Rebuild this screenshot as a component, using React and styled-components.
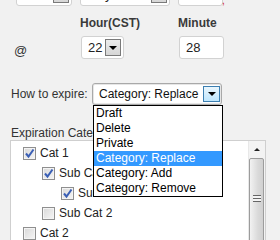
import React from 'react';
import styled, {createGlobalStyle} from 'styled-components';

const Global = createGlobalStyle`
  body {
    margin: 0;
    background: #f1f1f1;
    overflow: hidden;
  }
`;

const Page = styled.div`
  margin-top: -17px;
  padding-left: 10px;
  font-family: "Liberation Sans", Arial, sans-serif;
  font-size: 12px;
  color: #333;
`;

const DateRow = styled.div`
  display: flex;
  align-items: center;
  gap: 8px;
  padding-left: 6px;
`;

const Field = styled.div`
  box-sizing: border-box;
  width: ${p => p.w}px;
  height: 23px;
  display: flex;
  align-items: center;
  justify-content: space-between;
  padding: 0 2px 0 6px;
  background: #fff;
  border: 1px solid #d2d2d2;
  border-radius: 3px;
  color: #222;
  font-size: 13px;
`;

const DropButton = styled.span`
  box-sizing: border-box;
  width: 16px;
  height: 17px;
  display: flex;
  align-items: center;
  justify-content: center;
  border: 1px solid #7a7a7a;
  background: linear-gradient(#ececec, #d6d6d6);
`;

const Arrow = styled.span`
  width: 0;
  height: 0;
  border-left: 4px solid transparent;
  border-right: 4px solid transparent;
  border-top: 4px solid #000;
`;

const Mark = styled.span`
  color: #d02030;
  margin-left: -9px;
  align-self: flex-end;
  font-size: 10px;
  line-height: 10px;
`;

const TimeGrid = styled.div`
  display: grid;
  grid-template-columns: 70px 98px auto;
  grid-template-rows: 14px 23px;
  row-gap: 6px;
  margin-top: 10px;
`;

const ColLabel = styled.div`
  font-weight: bold;
  line-height: 14px;
  color: #3a3a3a;
  grid-column: ${p => p.col};
`;

const At = styled.div`
  grid-column: 1;
  grid-row: 2;
  align-self: end;
  padding-left: 4px;
  margin-bottom: 1px;
  line-height: 14px;
  font-size: 13px;
`;

const Cell = styled.div`
  grid-row: 2;
  grid-column: ${p => p.col};
  padding-left: ${p => p.pad || 0}px;
`;

const ExpireRow = styled.div`
  display: flex;
  align-items: center;
  margin-top: 24px;
`;

const RowLabel = styled.div`
  width: 82px;
  padding-left: 1px;
  box-sizing: border-box;
`;

const SelectWrap = styled.div`
  position: relative;
`;

const Select = styled.div`
  box-sizing: border-box;
  width: 130px;
  height: 22px;
  display: flex;
  align-items: center;
  justify-content: space-between;
  padding: 0 1px 0 6px;
  background: #fff;
  border: 1px solid #a9a9a9;
  border-radius: 3px;
  box-shadow: inset 0 0 0 1px #e6e6e6;
  color: #111;
`;

const BlueButton = styled(DropButton)`
  width: 17px;
  height: 16px;
  border-color: #3c7fb1;
  background: linear-gradient(#eaf6fd, #bee6fd);
`;

const Menu = styled.ul`
  position: absolute;
  top: 22px;
  left: 1px;
  width: 130px;
  box-sizing: border-box;
  margin: 0;
  padding: 0;
  list-style: none;
  background: #fff;
  border: 1px solid #000;
  z-index: 2;
`;

const Option = styled.li`
  height: 15px;
  line-height: 15px;
  padding-left: 2px;
  color: ${p => (p.active ? '#fff' : '#000')};
  background: ${p => (p.active ? '#3399ff' : 'transparent')};
`;

const SectionLabel = styled.div`
  margin-top: 21px;
  padding-left: 1px;
  line-height: 14px;
`;

const TreeBox = styled.div`
  width: 256px;
  height: 150px;
  box-sizing: border-box;
  display: flex;
  background: #fff;
  border: 1px solid #cfcfcf;
`;

const Tree = styled.div`
  flex: 1;
  padding-top: 2px;
`;

const Node = styled.div`
  height: 20px;
  display: flex;
  align-items: center;
  padding-left: ${p => 12 + p.level * 19}px;
  color: #222;
  white-space: nowrap;
`;

const Box = styled.span`
  box-sizing: border-box;
  width: 13px;
  height: 13px;
  margin-right: 4px;
  flex: none;
  display: flex;
  align-items: center;
  justify-content: center;
  border: 1px solid #8f8f8f;
  background: linear-gradient(135deg, #d8d8d8, #f6f6f6);
  box-shadow: inset 0 0 0 1px #f4f4f4;
`;

const Scroll = styled.div`
  width: 16px;
  display: flex;
  flex-direction: column;
  background: #f3f3f3;
  border-left: 1px solid #e8e8e8;
`;

const ScrollUp = styled.div`
  height: 17px;
  display: flex;
  align-items: center;
  justify-content: center;
`;

const UpArrow = styled.span`
  width: 0;
  height: 0;
  border-left: 3px solid transparent;
  border-right: 3px solid transparent;
  border-bottom: 3px solid #222;
`;

const Thumb = styled.div`
  height: 100px;
  margin: 0 1px 0 0;
  border: 1px solid #9c9c9c;
  border-radius: 2px;
  background: linear-gradient(to right, #f2f2f2, #dadada 60%, #d0d0d0);
  display: flex;
  align-items: center;
  justify-content: center;
  padding-bottom: 20px;
  box-sizing: border-box;
`;

const Grip = styled.span`
  width: 8px;
  height: 7px;
  background: repeating-linear-gradient(#666 0 1px, #f4f4f4 1px 3px);
`;

const Check = () => (
  <svg width="11" height="11" viewBox="0 0 11 11">
    <path d="M2 5.5 L4.5 8.5 L9.5 1.5" fill="none" stroke="#3a5fb5" strokeWidth="2" />
  </svg>
);

const options = ['Draft', 'Delete', 'Private', 'Category: Replace', 'Category: Add', 'Category: Remove'];

const nodes = [
  {label: 'Cat 1', level: 0, checked: true},
  {label: 'Sub Cat 1', level: 1, checked: true},
  {label: 'Sub Sub Cat 1', level: 2, checked: true},
  {label: 'Sub Cat 2', level: 1, checked: false},
  {label: 'Cat 2', level: 0, checked: false},
  {label: 'Cat 3', level: 0, checked: false},
];

export default function App() {
  return (
    <>
      <Global />
      <Page>
        <DateRow>
          <Field w={56}>2013<DropButton><Arrow /></DropButton></Field>
          <Field w={90}>May<DropButton><Arrow /></DropButton></Field>
          <Field w={45}>30</Field>
          <Mark>,</Mark>
        </DateRow>

        <TimeGrid>
          <ColLabel col={2}>Hour(CST)</ColLabel>
          <ColLabel col={3}>Minute</ColLabel>
          <At>@</At>
          <Cell col={2} pad={1}>
            <Field w={43}>22<DropButton><Arrow /></DropButton></Field>
          </Cell>
          <Cell col={3} pad={1}>
            <Field w={45}>28</Field>
          </Cell>
        </TimeGrid>

        <ExpireRow>
          <RowLabel>How to expire:</RowLabel>
          <SelectWrap>
            <Select>
              Category: Replace
              <BlueButton><Arrow /></BlueButton>
            </Select>
            <Menu>
              {options.map(o => (
                <Option key={o} active={o === 'Category: Replace'}>{o}</Option>
              ))}
            </Menu>
          </SelectWrap>
        </ExpireRow>

        <SectionLabel>Expiration Categories:</SectionLabel>
        <TreeBox>
          <Tree>
            {nodes.map(n => (
              <Node key={n.label} level={n.level}>
                <Box>{n.checked && <Check />}</Box>
                {n.label}
              </Node>
            ))}
          </Tree>
          <Scroll>
            <ScrollUp><UpArrow /></ScrollUp>
            <Thumb><Grip /></Thumb>
          </Scroll>
        </TreeBox>
      </Page>
    </>
  );
}
